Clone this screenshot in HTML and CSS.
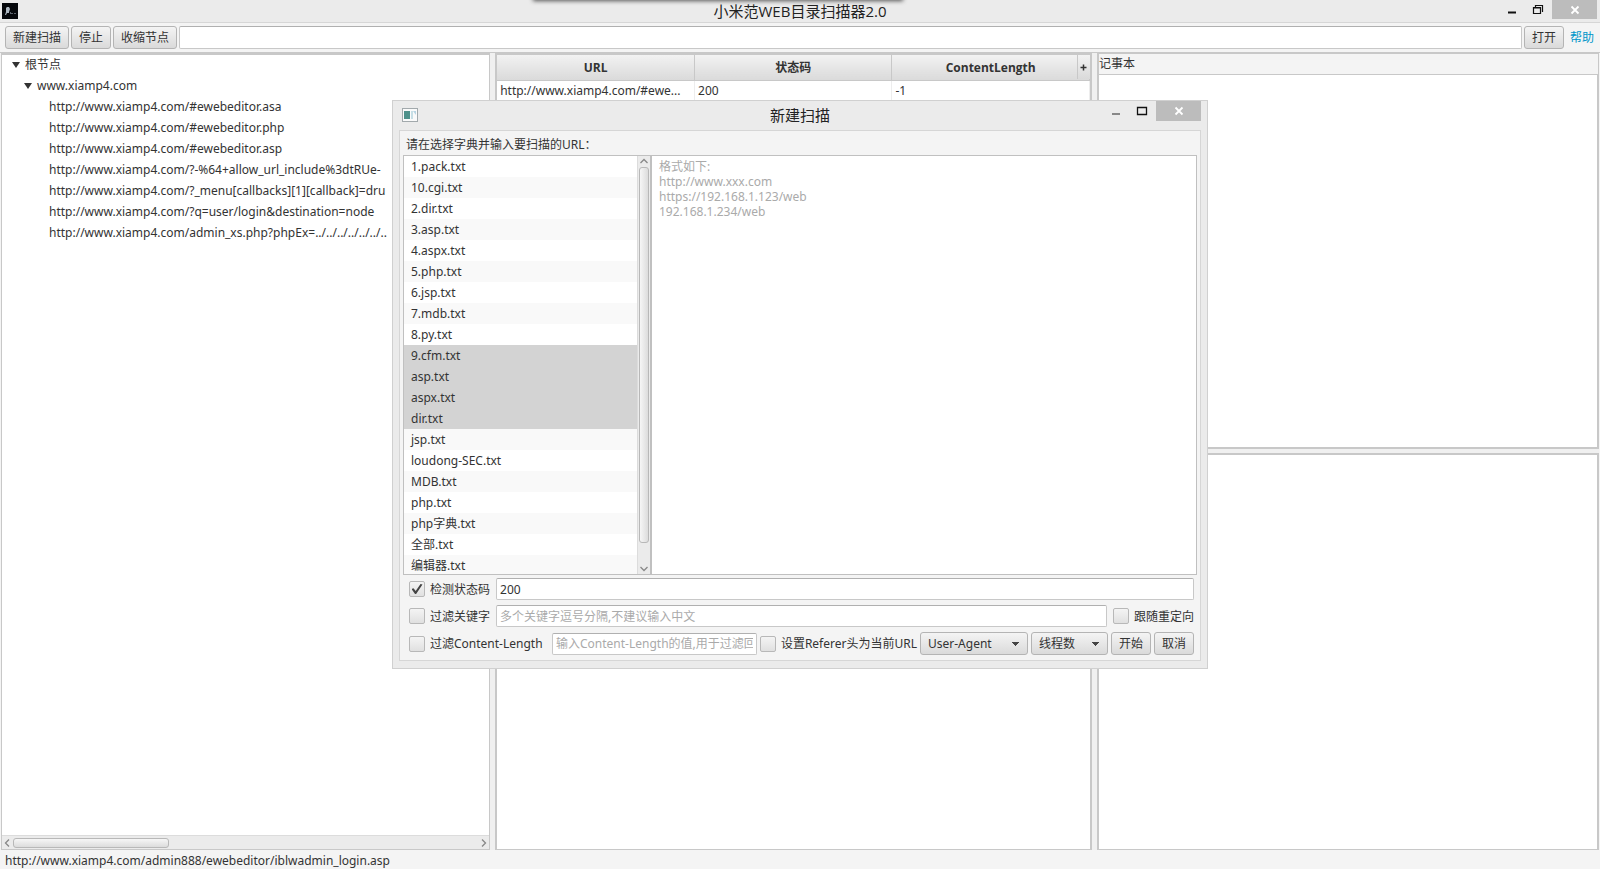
FILE: index.html
```html
<!DOCTYPE html>
<html lang="zh-CN">
<head>
<meta charset="utf-8">
<title>小米范WEB目录扫描器2.0</title>
<link rel="stylesheet" href="styles.css">
</head>
<body>
<div class="app">
  <header class="titlebar">
    <svg class="app-icon" viewBox="0 0 16 16" aria-hidden="true"><rect width="16" height="16" fill="#05070b"/><path d="M4 5l1-1h2l1 2-1 3v1H5L4 12H3l1-3z" fill="#aeb8c2"/><path d="M8 9h1v1h2v1H8zM12 10h2v1h-2z" fill="#59616b"/></svg>
    <h1 class="title">小米范WEB目录扫描器2.0</h1>
    <div class="window-buttons">
      <button class="win-btn" aria-label="最小化"><svg viewBox="0 0 12 12"><path d="M2 8.5h8" stroke="#111" stroke-width="2"/></svg></button>
      <button class="win-btn" aria-label="还原"><svg viewBox="0 0 12 12"><path d="M1.500 3.500h7v6h-7zM1 4h8M3.500 3V1.500h7V8" fill="none" stroke="#111" stroke-width="1.200"/></svg></button>
      <button class="win-btn win-close" aria-label="关闭"><svg viewBox="0 0 12 12"><path d="M2.500 2.500l7 7M9.500 2.500l-7 7" stroke="#fff" stroke-width="1.800"/></svg></button>
    </div>
    <div class="pull-tab"></div>
  </header>

  <div class="toolbar">
    <button class="btn">新建扫描</button>
    <button class="btn">停止</button>
    <button class="btn">收缩节点</button>
    <input class="field address" type="text" aria-label="地址">
    <button class="btn">打开</button>
    <a class="help" href="#">帮助</a>
  </div>

  <main class="panes">
    <section class="pane tree-pane">
      <ul class="tree">
        <li><span class="node"><i class="arrow"></i>根节点</span>
          <ul>
            <li><span class="node"><i class="arrow"></i>www.xiamp4.com</span>
              <ul>
                <li><span class="node leaf">http://www.xiamp4.com/#ewebeditor.asa</span></li>
                <li><span class="node leaf">http://www.xiamp4.com/#ewebeditor.php</span></li>
                <li><span class="node leaf">http://www.xiamp4.com/#ewebeditor.asp</span></li>
                <li><span class="node leaf">http://www.xiamp4.com/?-%64+allow_url_include%3dtRUe-</span></li>
                <li><span class="node leaf">http://www.xiamp4.com/?_menu[callbacks][1][callback]=dru</span></li>
                <li><span class="node leaf">http://www.xiamp4.com/?q=user/login&amp;destination=node</span></li>
                <li><span class="node leaf">http://www.xiamp4.com/admin_xs.php?phpEx=../../../../../../..</span></li>
              </ul>
            </li>
          </ul>
        </li>
      </ul>
      <div class="hscroll">
        <svg viewBox="0 0 8 8"><path d="M6 0.500L2.500 4L6 7.500" fill="none" stroke="#888" stroke-width="1.300"/></svg>
        <div class="htrack"><div class="hthumb"></div></div>
        <svg viewBox="0 0 8 8"><path d="M2 0.500L5.500 4L2 7.500" fill="none" stroke="#888" stroke-width="1.300"/></svg>
      </div>
    </section>
    <div class="divider"></div>
    <section class="pane table-pane">
      <table class="results">
        <thead><tr><th>URL</th><th>状态码</th><th>ContentLength</th></tr></thead>
        <tbody><tr><td>http://www.xiamp4.com/#ewe...</td><td>200</td><td>-1</td></tr></tbody>
      </table>
      <button class="add-col" aria-label="列"><svg viewBox="0 0 7 7"><path d="M3.500 0.500v6M0.500 3.500h6" stroke="#333" stroke-width="1.500"/></svg></button>
    </section>
    <div class="divider"></div>
    <section class="side">
      <div class="notes">
        <label class="notes-label" for="notes">记事本</label>
        <textarea class="notes-text" id="notes"></textarea>
      </div>
      <div class="hdivider"></div>
      <div class="output"></div>
    </section>
  </main>

  <footer class="status">http://www.xiamp4.com/admin888/ewebeditor/iblwadmin_login.asp</footer>
</div>

<div class="dialog" role="dialog" aria-labelledby="dlg-title">
  <header class="dialog-bar">
    <svg class="dialog-icon" viewBox="0 0 16 14" aria-hidden="true"><rect x="0.500" y="0.500" width="15" height="13" fill="#fafafa" stroke="#a2a9ac"/><rect x="2" y="3" width="6" height="8" fill="#4f918b"/><rect x="9" y="3" width="2" height="8" fill="#c7dfe6"/><path d="M11 3h3v4z" fill="#b7d4e2"/></svg>
    <h2 class="title" id="dlg-title">新建扫描</h2>
    <div class="window-buttons">
      <button class="win-btn" aria-label="最小化"><svg viewBox="0 0 12 12"><path d="M2 9h8" stroke="#888" stroke-width="2"/></svg></button>
      <button class="win-btn" aria-label="最大化"><svg viewBox="0 0 12 12"><path d="M1.500 2.500h9v7h-9zM1 2.500h10" fill="none" stroke="#111" stroke-width="1.300"/></svg></button>
      <button class="win-btn win-close" aria-label="关闭"><svg viewBox="0 0 12 12"><path d="M2.500 2.500l7 7M9.500 2.500l-7 7" stroke="#fff" stroke-width="1.800"/></svg></button>
    </div>
  </header>
  <div class="dialog-body">
    <label class="prompt" for="targets">请在选择字典并输入要扫描的URL：</label>
    <div class="split">
      <div class="dict">
        <ul class="dict-list" role="listbox" aria-label="字典" aria-multiselectable="true">
          <li role="option">1.pack.txt</li>
          <li role="option">10.cgi.txt</li>
          <li role="option">2.dir.txt</li>
          <li role="option">3.asp.txt</li>
          <li role="option">4.aspx.txt</li>
          <li role="option">5.php.txt</li>
          <li role="option">6.jsp.txt</li>
          <li role="option">7.mdb.txt</li>
          <li role="option">8.py.txt</li>
          <li role="option" aria-selected="true">9.cfm.txt</li>
          <li role="option" aria-selected="true">asp.txt</li>
          <li role="option" aria-selected="true">aspx.txt</li>
          <li role="option" aria-selected="true">dir.txt</li>
          <li role="option">jsp.txt</li>
          <li role="option">loudong-SEC.txt</li>
          <li role="option">MDB.txt</li>
          <li role="option">php.txt</li>
          <li role="option">php字典.txt</li>
          <li role="option">全部.txt</li>
          <li role="option">编辑器.txt</li>
        </ul>
        <div class="vscroll">
          <svg viewBox="0 0 8 8"><path d="M0.500 6L4 2.500L7.500 6" fill="none" stroke="#888" stroke-width="1.300"/></svg>
          <div class="vtrack"><div class="vthumb"></div></div>
          <svg viewBox="0 0 8 8"><path d="M0.500 2L4 5.500L7.500 2" fill="none" stroke="#888" stroke-width="1.300"/></svg>
        </div>
      </div>
      <textarea class="targets" id="targets" placeholder="格式如下:&#10;http://www.xxx.com&#10;https://192.168.1.123/web&#10;192.168.1.234/web"></textarea>
    </div>
    <div class="options">
      <div class="row">
        <label class="check"><input type="checkbox" checked>检测状态码</label>
        <input class="field grow" type="text" value="200" aria-label="状态码">
      </div>
      <div class="row">
        <label class="check"><input type="checkbox">过滤关键字</label>
        <input class="field grow" type="text" placeholder="多个关键字逗号分隔,不建议输入中文" aria-label="关键字">
        <label class="check"><input type="checkbox">跟随重定向</label>
      </div>
      <div class="row row-tight">
        <label class="check check-length"><input type="checkbox">过滤Content-Length</label>
        <input class="field grow" type="text" placeholder="输入Content-Length的值,用于过滤回显" aria-label="Content-Length">
        <label class="check"><input type="checkbox">设置Referer头为当前URL</label>
        <select class="btn combo combo-agent" aria-label="User-Agent"><option>User-Agent</option></select>
        <select class="btn combo combo-threads" aria-label="线程数"><option>线程数</option></select>
        <button class="btn">开始</button>
        <button class="btn">取消</button>
      </div>
    </div>
  </div>
</div>
</body>
</html>
```
FILE: styles.css
```css
* { box-sizing: border-box; }

body {
  margin: 0;
  font-family: "Noto Sans", "Noto Sans CJK SC", sans-serif;
  font-size: 12px;
  line-height: 21px;
  color: #333;
}

button, input, select, textarea { font: inherit; color: inherit; margin: 0; }
button, input:focus, textarea:focus { outline: none; }
ul { list-style: none; margin: 0; padding: 0; }

.app {
  display: flex;
  flex-direction: column;
  height: 100vh;
  overflow: hidden;
  background: #f4f4f4;
}

/* Title bars */
.titlebar {
  position: relative;
  display: flex;
  justify-content: space-between;
  height: 23px;
  background: #ebebeb;
  border-bottom: 1px solid #d6d6d6;
}
.app-icon { width: 16px; height: 16px; margin: 3px 2px; }
.title {
  position: absolute;
  inset: 0;
  margin: 0;
  text-align: center;
  font-size: 15px;
  font-weight: 400;
  line-height: 22px;
  color: #222;
  pointer-events: none;
}
.titlebar .title { font-family: "Open Sans", "Noto Sans CJK SC", sans-serif; }
.pull-tab {
  position: absolute;
  top: -4px;
  left: 33.4%;
  width: 23%;
  height: 4px;
  box-shadow: 0 0 4px 1px #555;
}
.window-buttons { display: flex; height: 19px; padding-right: 3px; }
.win-btn {
  display: grid;
  place-items: center;
  width: 26px;
  padding: 0;
  border: 0;
  background: none;
}
.win-btn svg { width: 12px; height: 12px; }
.win-close { width: 45px; margin-left: 1px; background: #bcbcbc; }

/* Controls */
.toolbar {
  display: flex;
  align-items: center;
  gap: 2px;
  padding: 3px 6px 3px 5px;
  border-bottom: 1px solid #c8c8c8;
}
.btn {
  height: 23px;
  padding: 0 7px;
  border: 1px solid #b4b4b4;
  border-radius: 3px;
  background: linear-gradient(#f4f4f4, #dadada);
  line-height: 20px;
  white-space: nowrap;
}
.field {
  height: 22px;
  min-width: 0;
  padding: 0 3px;
  border: 1px solid #c8c8c8;
  border-top-color: #b0b0b0;
  border-radius: 2px;
  background: #fff;
  line-height: 18px;
}
.address { flex: 1; height: 23px; }
.grow { flex: 1; }
::placeholder { color: #aaa; opacity: 1; }
.help { margin-left: 4px; color: #0096c9; text-decoration: none; }

/* Main panes */
.panes { flex: 1; display: flex; min-height: 0; padding: 0 1px; }
.pane {
  position: relative;
  display: flex;
  flex-direction: column;
  min-width: 0;
  background: #fff;
  border: 1px solid #c8c8c8;
  border-top-width: 2px;
  overflow: hidden;
}
.tree-pane { flex: 489; }
.table-pane { flex: 595; border-width: 2px 2px 1px; }
.side { flex: 504; display: flex; flex-direction: column; min-width: 0; }
.divider { width: 5px; background: #f0f0f0; }

.tree { flex: 1; margin-top: -1px; }
.tree ul .node { padding-left: 22px; }
.tree .node { display: flex; align-items: center; padding-left: 10px; white-space: nowrap; }
.tree ul ul .leaf { padding-left: 47px; }
.arrow {
  width: 8px;
  margin-right: 5px;
  border: 4px solid transparent;
  border-top: 6px solid #333;
  border-bottom: 0;
}

.hscroll {
  display: flex;
  align-items: center;
  height: 14px;
  padding: 0 1px;
  background: #ebebeb;
  border-top: 1px solid #dcdcdc;
}
.hscroll svg, .vscroll svg { width: 8px; height: 8px; }
.htrack { flex: 1; padding: 0 2px; }
.hthumb { width: 33.5%; height: 10px; border: 1px solid #b8b8b8; border-radius: 3px; background: linear-gradient(#f6f6f6, #dcdcdc); }

.results { width: 100%; table-layout: fixed; border-collapse: collapse; }
.results th {
  height: 25px;
  padding: 0;
  border-right: 1px solid #c8c8c8;
  border-bottom: 1px solid #c8c8c8;
  background: linear-gradient(#f2f2f2, #dadada);
  font-family: "Open Sans", "Noto Sans CJK SC", sans-serif;
}
.results td {
  height: 22px;
  padding: 0 3px;
  line-height: 20px;
  border-right: 1px solid #ededed;
  white-space: nowrap;
}
.add-col {
  position: absolute;
  top: 0;
  right: 0;
  display: grid;
  place-items: center;
  width: 13px;
  height: 24px;
  padding: 0;
  border: 0;
  border-left: 1px solid #c8c8c8;
  background: linear-gradient(#f2f2f2, #dadada);
}
.add-col svg { width: 7px; height: 7px; }

.notes { flex: 396; display: flex; flex-direction: column; border: 1px solid #c8c8c8; border-left-width: 2px; }
.notes-label { line-height: 20px; }
.notes-text { flex: 1; border: 1px solid #c8c8c8; border-left: 0; background: #fff; resize: none; }
.hdivider { height: 4px; background: #f0f0f0; }
.output { flex: 397; background: #fff; border: 2px solid #c8c8c8; border-bottom-width: 1px; }

.status { height: 19px; padding-left: 5px; line-height: 21px; }

/* Dialog */
.dialog {
  position: absolute;
  top: 100px;
  left: 392px;
  width: 816px;
  padding: 0 6px 7px;
  background: #ebebeb;
  border: 1px solid #d0d0d0;
}
.dialog-bar { position: relative; display: flex; justify-content: space-between; height: 29px; }
.dialog-bar .title { line-height: 28px; }
.dialog-bar .window-buttons { padding: 0; height: 20px; }
.dialog-icon { width: 16px; height: 14px; margin: 7px 3px; }
.dialog-body { padding: 3px 3px 5px; background: #f4f4f4; border: 1px solid #d6d6d6; }
.prompt { display: block; padding-left: 3px; }
.split { display: flex; height: 420px; }
.dict { display: flex; width: 248px; border: 1px solid #c0c0c0; border-right: 0; background: #fff; overflow: hidden; }
.dict-list { flex: 1; }
.dict-list li { padding-left: 7px; }
.dict-list li:nth-child(even) { background: #f9f9f9; }
.dict-list li[aria-selected="true"] { background: #d3d3d3; }
.vscroll {
  display: flex;
  flex-direction: column;
  align-items: center;
  width: 14px;
  padding: 1px 0;
  background: #ebebeb;
  border-left: 1px solid #dcdcdc;
  border-right: 1px solid #c0c0c0;
}
.vtrack { flex: 1; padding: 2px 0; }
.vthumb { width: 10px; height: 95%; border: 1px solid #b8b8b8; border-radius: 3px; background: linear-gradient(90deg, #f6f6f6, #dcdcdc); }
.targets {
  flex: 1;
  padding: 3px 7px;
  border: 1px solid #c0c0c0;
  background: #fff;
  line-height: 15px;
  resize: none;
}

.options { display: flex; flex-direction: column; gap: 5px; padding: 3px 3px 0 6px; }
.row { display: flex; align-items: center; gap: 6px; }
.row-tight { gap: 3px; }
.check { display: flex; align-items: center; gap: 5px; white-space: nowrap; }
.check-length { width: 140px; }
.check input {
  appearance: none;
  display: grid;
  place-items: center;
  width: 16px;
  height: 16px;
  border: 1px solid #b8b8b8;
  border-radius: 2px;
  background: linear-gradient(#f4f4f4, #e0e0e0);
}
.check input:checked::before {
  content: "";
  width: 11px;
  height: 10px;
  background: #444;
  clip-path: polygon(0 50%, 18% 42%, 38% 70%, 82% 0, 100% 6%, 42% 100%, 32% 100%);
}
.combo {
  appearance: none;
  background:
    conic-gradient(from -45deg at 50% 100%, #444 90deg, transparent 0) right 7px center / 8px 4px no-repeat,
    linear-gradient(#f4f4f4, #dadada);
}
.combo {
  background:
    linear-gradient(to bottom right, #444 50%, transparent 50%) right 7px center / 4px 4px no-repeat,
    linear-gradient(to bottom left, #444 50%, transparent 50%) right 11px center / 4px 4px no-repeat,
    linear-gradient(#f4f4f4, #dadada);
}
.combo-agent { width: 108px; }
.combo-threads { width: 77px; }
```
